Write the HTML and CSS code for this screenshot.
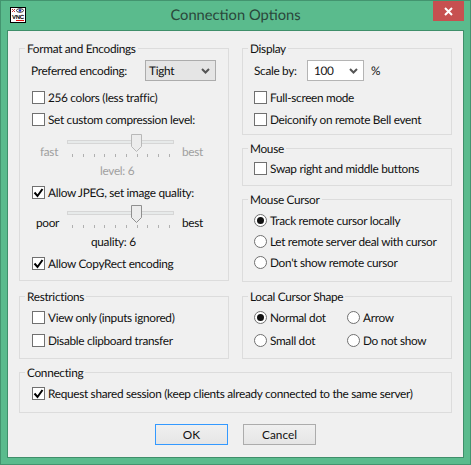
FILE: index.html
```html
<!DOCTYPE html>
<html lang="en">
<head>
    <meta charset="UTF-8">
    <title>Connection Options</title>
    <link rel="stylesheet" href="styles.css">
</head>
<body>
    <div class="window">
        <div class="titlebar">
            <svg class="app-icon" width="16" height="16" viewBox="0 0 16 16">
                <rect x="0.5" y="0.5" width="15" height="15" fill="#fff" stroke="#000"/>
                <path d="M2 2l3 3M5 2l-3 3" stroke="#c03030" stroke-width="1"/>
                <ellipse cx="10" cy="3.5" rx="3.5" ry="1.8" fill="#fff" stroke="#000" stroke-width="0.8"/>
                <circle cx="10" cy="3.5" r="1.2" fill="#1030c0"/>
                <text x="2" y="12" class="app-icon-text">VNC</text>
                <rect x="6" y="13" width="8" height="1" fill="#e01010"/>
            </svg>
            <div class="title">Connection Options</div>
            <div class="close">
                <svg width="9" height="9" viewBox="0 0 9 9">
                    <path d="M1 1l7 7M8 1l-7 7" stroke="#fff" stroke-width="2"/>
                </svg>
            </div>
        </div>

        <div class="content">
            <div class="columns">
                <fieldset class="group">
                    <legend>Format and Encodings</legend>
                    <div class="group-body format-body">
                        <div class="field-row">
                            <span class="field-label encoding-label">Preferred encoding:</span>
                            <div class="dropdown encoding-dropdown">
                                <span>Tight</span>
                                <svg width="9" height="6" viewBox="0 0 9 6"><path d="M1 1l3.5 3.5L8 1" fill="none" stroke="#555" stroke-width="2"/></svg>
                            </div>
                        </div>
                        <label class="option gap-8"><span class="check"></span>256 colors (less traffic)</label>
                        <label class="option gap-5"><span class="check"></span>Set custom compression level:</label>

                        <div class="slider-row gap-6 disabled">
                            <span class="slider-end fast">fast</span>
                            <div class="slider">
                                <div class="track"></div>
                                <svg class="thumb" width="11" height="18" viewBox="0 0 11 18"><path d="M0.5 0.5h10v12l-5 5-5-5z" fill="#ececec" stroke="#b8b8b8"/></svg>
                                <div class="ticks"><i></i><i></i><i></i><i></i><i></i><i></i><i></i><i></i><i></i><i></i></div>
                            </div>
                            <span class="slider-end">best</span>
                        </div>
                        <div class="slider-value value-level gap-4 disabled">level: 6</div>

                        <label class="option gap-5"><span class="check on"><svg width="13" height="13" viewBox="0 0 13 13"><path d="M2.5 6.5l3 3.5 5-7" fill="none" stroke="#000" stroke-width="2"/></svg></span>Allow JPEG, set image quality:</label>

                        <div class="slider-row gap-4">
                            <span class="slider-end poor">poor</span>
                            <div class="slider">
                                <div class="track"></div>
                                <svg class="thumb" width="11" height="18" viewBox="0 0 11 18"><path d="M0.5 0.5h10v12l-5 5-5-5z" fill="#ececec" stroke="#8f8f8f"/></svg>
                                <div class="ticks"><i></i><i></i><i></i><i></i><i></i><i></i><i></i><i></i><i></i><i></i></div>
                            </div>
                            <span class="slider-end">best</span>
                        </div>
                        <div class="slider-value gap-4">quality: 6</div>

                        <label class="option gap-5"><span class="check on"><svg width="13" height="13" viewBox="0 0 13 13"><path d="M2.5 6.5l3 3.5 5-7" fill="none" stroke="#000" stroke-width="2"/></svg></span>Allow CopyRect encoding</label>
                    </div>
                </fieldset>

                <div class="stack">
                    <fieldset class="group">
                        <legend>Display</legend>
                        <div class="group-body display-body">
                            <div class="field-row">
                                <span class="field-label scale-label">Scale by:</span>
                                <div class="dropdown scale-dropdown">
                                    <span>100</span>
                                    <svg width="9" height="6" viewBox="0 0 9 6"><path d="M1 1l3.5 3.5L8 1" fill="none" stroke="#555" stroke-width="2"/></svg>
                                </div>
                                <span class="percent">%</span>
                            </div>
                            <label class="option gap-8"><span class="check"></span>Full-screen mode</label>
                            <label class="option gap-5"><span class="check"></span>Deiconify on remote Bell event</label>
                        </div>
                    </fieldset>

                    <fieldset class="group">
                        <legend>Mouse</legend>
                        <div class="group-body mouse-body">
                            <label class="option"><span class="check"></span>Swap right and middle buttons</label>
                        </div>
                    </fieldset>

                    <fieldset class="group">
                        <legend>Mouse Cursor</legend>
                        <div class="group-body cursor-body">
                            <label class="option"><span class="radio on"></span>Track remote cursor locally</label>
                            <label class="option gap-4"><span class="radio"></span>Let remote server deal with cursor</label>
                            <label class="option gap-4"><span class="radio"></span>Don't show remote cursor</label>
                        </div>
                    </fieldset>
                </div>
            </div>

            <div class="columns second-row">
                <fieldset class="group">
                    <legend>Restrictions</legend>
                    <div class="group-body short-body">
                        <label class="option"><span class="check"></span>View only (inputs ignored)</label>
                        <label class="option gap-6"><span class="check"></span>Disable clipboard transfer</label>
                    </div>
                </fieldset>

                <fieldset class="group">
                    <legend>Local Cursor Shape</legend>
                    <div class="group-body short-body shape-grid">
                        <label class="option"><span class="radio on"></span>Normal dot</label>
                        <label class="option"><span class="radio"></span>Arrow</label>
                        <label class="option"><span class="radio"></span>Small dot</label>
                        <label class="option"><span class="radio"></span>Do not show</label>
                    </div>
                </fieldset>
            </div>

            <fieldset class="group connecting">
                <legend>Connecting</legend>
                <div class="group-body connecting-body">
                    <label class="option"><span class="check on"><svg width="13" height="13" viewBox="0 0 13 13"><path d="M2.5 6.5l3 3.5 5-7" fill="none" stroke="#000" stroke-width="2"/></svg></span>Request shared session (keep clients already connected to the same server)</label>
                </div>
            </fieldset>

            <div class="buttons">
                <button class="btn default">OK</button>
                <button class="btn">Cancel</button>
            </div>
        </div>
    </div>
</body>
</html>
```

FILE: styles.css
```css
* {
    box-sizing: border-box;
}

body {
    margin: 0;
    font-family: "Lato", sans-serif;
    font-size: 11.8px;
    line-height: 17px;
    letter-spacing: -0.3px;
    text-rendering: geometricPrecision;
    color: #111;
}

.window {
    width: 471px;
    height: 465px;
    background-color: #5abb8d;
    border: 1px solid #43946f;
    display: flex;
    flex-direction: column;
}

/* Title bar */
.titlebar {
    height: 29px;
    display: flex;
    align-items: flex-start;
    position: relative;
    flex-shrink: 0;
}

.app-icon {
    margin: 6px 0 0 9px;
}

.app-icon-text {
    font-family: "Liberation Sans", sans-serif;
    font-size: 6px;
    font-weight: 700;
}

.title {
    position: absolute;
    left: 0;
    right: 0;
    top: 3px;
    line-height: 22px;
    text-align: center;
    font-size: 14.7px;
    letter-spacing: 0;
    color: #2a473b;
}

.close {
    position: absolute;
    right: 6px;
    top: 0;
    width: 31px;
    height: 20px;
    background-color: #c75050;
    display: flex;
    align-items: center;
    justify-content: center;
}

/* Client area */
.content {
    flex: 1;
    margin: 0 6px 6px;
    padding: 9px 11px 0;
    background-color: #f0f0f0;
    border: 1px solid #3f8f6a;
}

.columns {
    display: grid;
    grid-template-columns: 210px 210px;
    column-gap: 13px;
    align-items: start;
}

.second-row {
    margin-top: 6px;
}

.stack {
    display: flex;
    flex-direction: column;
    gap: 5px;
}

/* Group boxes */
.group {
    margin: 0;
    padding: 0;
    min-width: 0;
    border: 1px solid #dcdcdc;
}

.group legend {
    margin-left: 5px;
    padding: 0 2px;
    height: 16px;
    line-height: 17px;
}

.group-body {
    padding: 4px 10px 8px 12px;
}

.stack .group-body {
    padding-left: 11px;
}

.display-body {
    padding-bottom: 6px;
}

.cursor-body {
    padding-top: 5px;
    padding-bottom: 10px;
}

.short-body {
    padding-top: 5px;
    padding-bottom: 9px;
}

.connecting {
    width: 433px;
    margin-top: 5px;
}

.connecting-body {
    padding-top: 5px;
    padding-bottom: 10px;
}

.shape-grid {
    display: grid;
    grid-template-columns: 93px auto;
    row-gap: 6px;
    padding-left: 11px;
}

/* Spacing helpers */
.gap-4 { margin-top: 4px; }
.gap-5 { margin-top: 5px; }
.gap-6 { margin-top: 6px; }
.gap-8 { margin-top: 8px; }

/* Checkboxes and radios */
.option {
    display: flex;
    align-items: center;
    height: 17px;
    white-space: nowrap;
}

.check,
.radio {
    width: 13px;
    height: 13px;
    margin-right: 3px;
    background-color: #fff;
    border: 1px solid #707070;
    flex-shrink: 0;
    display: block;
    position: relative;
}

.check svg {
    position: absolute;
    left: -1px;
    top: -1px;
}

.radio {
    border-radius: 50%;
}

.radio.on::after {
    content: "";
    position: absolute;
    left: 2px;
    top: 2px;
    width: 7px;
    height: 7px;
    border-radius: 50%;
    background-color: #111;
}

/* Dropdowns */
.field-row {
    display: flex;
    align-items: center;
    height: 21px;
}

.field-label {
    white-space: nowrap;
}

.encoding-label {
    width: 114px;
    margin-left: -1px;
}

.scale-label {
    width: 53px;
}

.dropdown {
    height: 21px;
    display: flex;
    align-items: center;
    justify-content: space-between;
    padding: 0 5px 0 3px;
}

.encoding-dropdown {
    width: 71px;
    background-color: #e5e5e5;
    border: 1px solid #acacac;
}

.scale-dropdown {
    width: 57px;
    background-color: #fff;
    border: 1px solid #b4b4b4;
    padding-left: 6px;
}

.percent {
    margin-left: 7px;
}

/* Sliders */
.slider-row {
    display: flex;
    align-items: flex-end;
    height: 24px;
    line-height: 13px;
}

.disabled {
    color: #a0a0a0;
}

.slider-end {
    flex-shrink: 0;
}

.fast {
    width: 35px;
    padding-left: 8px;
}

.poor {
    width: 35px;
    padding-left: 4px;
}

.slider {
    width: 107px;
    height: 24px;
    margin-right: 8px;
    position: relative;
}

.track {
    position: absolute;
    left: 0;
    right: 0;
    top: 6px;
    height: 4px;
    background-color: #e7eaea;
    border: 1px solid #d6d6d6;
}

.thumb {
    position: absolute;
    left: 64px;
    top: 0;
}

.ticks {
    position: absolute;
    left: 5px;
    width: 98px;
    bottom: 0;
    height: 4px;
    display: flex;
    justify-content: space-between;
}

.ticks i {
    width: 1px;
    height: 3px;
    background-color: #b0b0b0;
}

.slider-value {
    height: 17px;
    padding-left: 59px;
}

.value-level {
    padding-left: 68px;
}

/* Buttons */
.buttons {
    display: flex;
    justify-content: center;
    gap: 15px;
    margin-top: 11px;
}

.btn {
    width: 73px;
    height: 21px;
    padding: 0;
    font: inherit;
    line-height: 17px;
    color: #111;
    background: linear-gradient(#f0f0f0, #e5e5e5);
    border: 1px solid #acacac;
}

.btn.default {
    border-color: #3399ff;
}
```
